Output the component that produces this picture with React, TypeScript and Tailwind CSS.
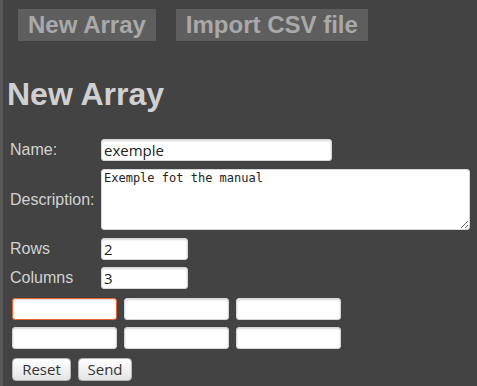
import { useState } from "react";

const inputCls =
  "h-[22px] bg-white rounded-[3px] border border-[#d6d6d6] shadow-[inset_0_1px_2px_rgba(0,0,0,0.15)] px-[2px] text-[15px] text-[#222] font-['Open_Sans'] outline-none";

const Field = ({ label, children }: { label: string; children: React.ReactNode }) => (
  <div className="flex items-center">
    <label className="w-[91px] text-[16px] leading-[18px] text-[#d2d2d2]">{label}</label>
    {children}
  </div>
);

const App = () => {
  const [rows] = useState(2);
  const [cols] = useState(3);

  return (
    <div className="min-h-screen bg-[#434343] border-l-[3px] border-[#585858] font-['Liberation_Sans',sans-serif]">
      <nav className="flex gap-[20px] pt-[9px] pl-[15px]">
        <button className="h-[32px] px-[10px] bg-[#5e5e5e] text-[24px] leading-[32px] font-bold text-[#a9a9a9]">
          New Array
        </button>
        <button className="h-[32px] px-[10px] bg-[#5e5e5e] text-[24px] leading-[32px] font-bold text-[#a9a9a9]">
          Import CSV file
        </button>
      </nav>

      <h1 className="mt-[35px] pl-[4px] text-[32px] leading-[36px] font-bold text-[#d0d0d0]">New Array</h1>

      <form className="mt-[27px] pl-[7px] flex flex-col">
        <Field label="Name:">
          <input className={`${inputCls} w-[231px]`} defaultValue="exemple" />
        </Field>
        <div className="mt-[8px]">
          <Field label="Description:">
            <textarea
              className="block w-[369px] h-[61px] bg-white rounded-[3px] border border-[#d6d6d6] px-[2px] py-[1px] text-[12px] leading-[15px] text-[#222] font-['DejaVu_Sans_Mono',monospace] outline-none"
              defaultValue="Exemple fot the manual"
            />
          </Field>
        </div>
        <div className="mt-[8px]">
          <Field label="Rows">
            <input className={`${inputCls} w-[87px]`} defaultValue={rows} />
          </Field>
        </div>
        <div className="mt-[7px]">
          <Field label="Columns">
            <input className={`${inputCls} w-[87px]`} defaultValue={cols} />
          </Field>
        </div>

        <div className="mt-[9px] ml-[2px] grid grid-cols-[105px_105px_105px] gap-x-[7px] gap-y-[7px]">
          {Array.from({ length: rows * cols }).map((_, i) => (
            <input
              key={i}
              autoFocus={i === 0}
              className={`${inputCls} w-[105px] ${i === 0 ? "border-[#e9652f] shadow-[0_0_0_1px_rgba(233,101,47,0.35)]" : ""}`}
            />
          ))}
        </div>

        <div className="mt-[9px] ml-[2px] flex gap-[7px]">
          <button
            type="button"
            className="h-[23px] w-[59px] rounded-[4px] border border-[#b5b5b5] bg-gradient-to-b from-white to-[#e4e4e4] text-[15px] leading-[21px] text-[#333] font-['Open_Sans']"
          >
            Reset
          </button>
          <button
            type="button"
            className="h-[23px] w-[54px] rounded-[4px] border border-[#b5b5b5] bg-gradient-to-b from-white to-[#e4e4e4] text-[15px] leading-[21px] text-[#333] font-['Open_Sans']"
          >
            Send
          </button>
        </div>
      </form>
    </div>
  );
};

export default App;
